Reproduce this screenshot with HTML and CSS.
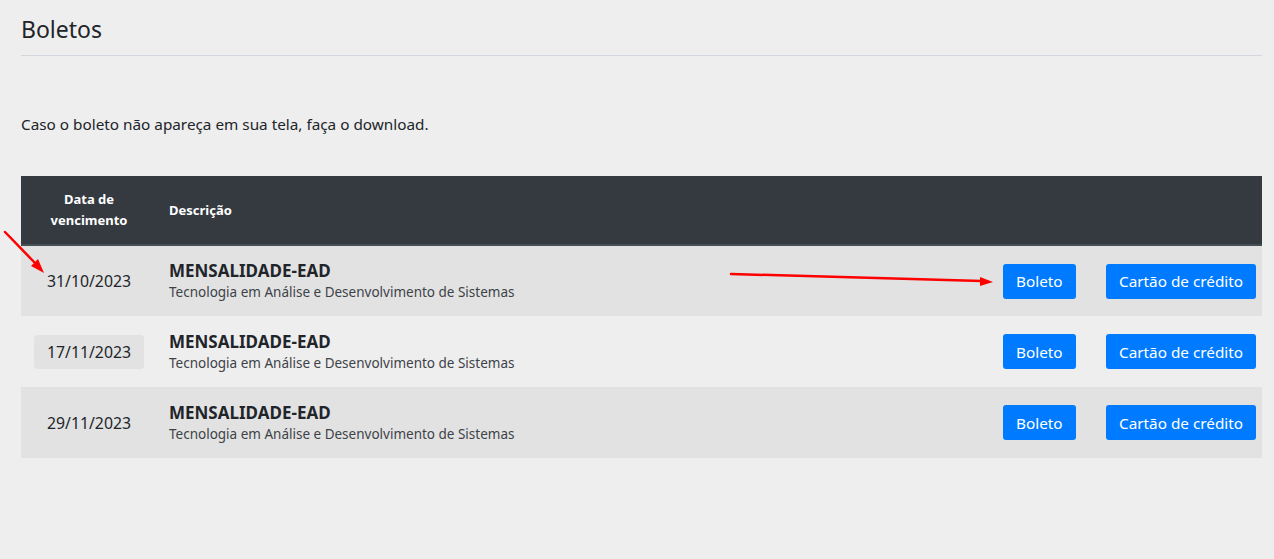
FILE: index.html
```html
<!DOCTYPE html>
<html lang="pt-BR">
<head>
<meta charset="utf-8">
<title>Boletos</title>
<link rel="stylesheet" href="styles.css">
</head>
<body>
<main class="page">
  <h1 class="title">Boletos</h1>
  <hr class="divider">
  <p class="notice">Caso o boleto não apareça em sua tela, faça o download.</p>
  <table class="table">
    <thead>
      <tr>
        <th class="col-date">Data de<br>vencimento</th>
        <th class="col-desc">Descrição</th>
        <th class="col-btn1"></th>
        <th class="col-btn2"></th>
      </tr>
    </thead>
    <tbody>
      <tr class="striped">
        <td class="col-date"><span class="date">31/10/2023</span></td>
        <td class="col-desc"><div class="item-title">MENSALIDADE-EAD</div><div class="item-sub">Tecnologia em Análise e Desenvolvimento de Sistemas</div></td>
        <td class="col-btn1"><button class="btn">Boleto</button></td>
        <td class="col-btn2"><button class="btn">Cartão de crédito</button></td>
      </tr>
      <tr>
        <td class="col-date"><span class="date date-hl">17/11/2023</span></td>
        <td class="col-desc"><div class="item-title">MENSALIDADE-EAD</div><div class="item-sub">Tecnologia em Análise e Desenvolvimento de Sistemas</div></td>
        <td class="col-btn1"><button class="btn">Boleto</button></td>
        <td class="col-btn2"><button class="btn">Cartão de crédito</button></td>
      </tr>
      <tr class="striped">
        <td class="col-date"><span class="date">29/11/2023</span></td>
        <td class="col-desc"><div class="item-title">MENSALIDADE-EAD</div><div class="item-sub">Tecnologia em Análise e Desenvolvimento de Sistemas</div></td>
        <td class="col-btn1"><button class="btn">Boleto</button></td>
        <td class="col-btn2"><button class="btn">Cartão de crédito</button></td>
      </tr>
    </tbody>
  </table>
</main>
<svg class="arrows" width="1274" height="559" viewBox="0 0 1274 559">
  <line x1="5" y1="232" x2="36" y2="264" stroke="#ff0000" stroke-width="2.5" stroke-linecap="round"/>
  <polygon points="44,273 31,266 38,259" fill="#ff0000"/>
  <line x1="731" y1="274" x2="982" y2="281" stroke="#ff0000" stroke-width="2.5" stroke-linecap="round"/>
  <polygon points="993,282 980,277 980,286" fill="#ff0000"/>
</svg>
</body>
</html>
```
FILE: styles.css
```css
html, body {
  margin: 0;
  padding: 0;
  background: #eeeeee;
}
body {
  font-family: "Noto Sans", "Open Sans", sans-serif;
  color: #212529;
  width: 1274px;
  height: 559px;
  overflow: hidden;
  position: relative;
}
.page {
  padding: 0 12px 0 21px;
}
.title {
  margin: 0;
  padding-top: 14px;
  font-size: 23px;
  font-weight: 400;
  line-height: 30px;
  color: #212529;
}
.divider {
  margin: 11px 0 0 0;
  border: 0;
  border-top: 1px solid #d3d8de;
}
.notice {
  margin: 58px 0 0 0;
  font-size: 15.3px;
  line-height: 20px;
}
.table {
  margin-top: 42px;
  width: 100%;
  border-collapse: collapse;
  table-layout: fixed;
}
.table th {
  background: #343a40;
  color: #fff;
  font-size: 13px;
  font-weight: 700;
  line-height: 21px;
  height: 69px;
  padding: 0 12px;
  border-bottom: 2px solid #454d55;
  text-align: left;
  box-sizing: border-box;
}
.table th.col-date {
  text-align: center;
}
.table td {
  height: 71px;
  padding: 0 12px;
  vertical-align: middle;
  box-sizing: border-box;
}
.table tr.striped td {
  background: #e2e2e2;
}
.table .col-date {
  width: 136px;
  text-align: center;
}
.table .col-btn1 {
  width: 103px;
  padding: 0 12px;
}
.table .col-btn2 {
  width: 168px;
  padding: 0 6px 0 12px;
}
.date {
  display: inline-block;
  font-size: 15.8px;
  line-height: 20px;
  padding: 7px 13px;
  border-radius: 4px;
}
.date-hl {
  background: #e2e2e2;
}
.item-title {
  font-size: 17px;
  font-weight: 700;
  line-height: 22px;
  color: #212529;
}
.item-sub {
  font-size: 13.5px;
  line-height: 20px;
  color: #3d4248;
}
.btn {
  font-family: inherit;
  background: #007bff;
  color: #fff;
  border: 0;
  border-radius: 3px;
  font-size: 15.3px;
  line-height: 20px;
  height: 35px;
  padding: 0 13px;
  cursor: pointer;
  white-space: nowrap;
}
.arrows {
  position: absolute;
  left: 0;
  top: 0;
  pointer-events: none;
}
```
